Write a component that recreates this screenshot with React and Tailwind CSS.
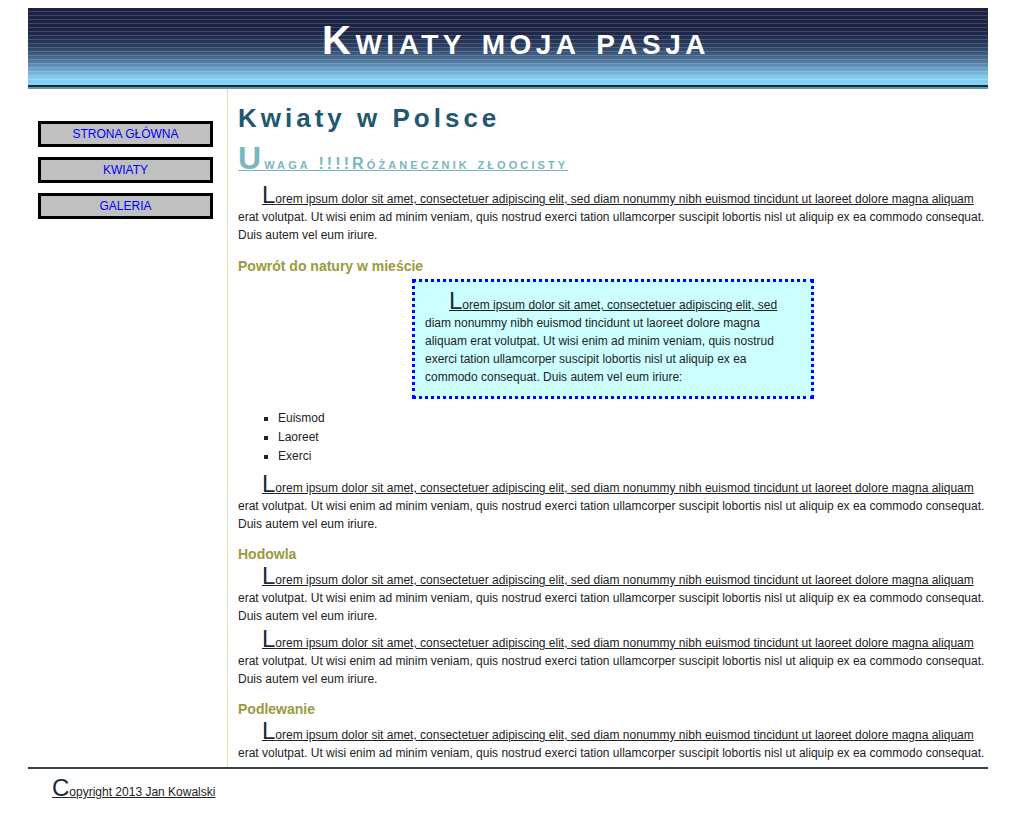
import React from 'react'

const lorem =
    'Lorem ipsum dolor sit amet, consectetuer adipiscing elit, sed diam nonummy nibh euismod tincidunt ut laoreet dolore magna aliquam erat volutpat. Ut wisi enim ad minim veniam, quis nostrud exerci tation ullamcorper suscipit lobortis nisl ut aliquip ex ea commodo consequat. Duis autem vel eum iriure.'

const Para = ({ children, className = '' }) => (
    <p
        className={
            'indent-6 first-line:underline first-letter:text-[24px] first-letter:text-[#1b2a3d] ' +
            className
        }
    >
        {children}
    </p>
)

const Heading = ({ children, className = 'mt-[12px]' }) => (
    <h3 className={'mb-[4px] text-[14px] leading-[18px] font-bold text-[#9c9a3c] ' + className}>{children}</h3>
)

const NavItem = ({ label }) => (
    <a
        href="#"
        className="block w-[175px] h-[26px] mb-[10px] border-[3px] border-black bg-[#c0c0c0] text-center text-[12px] leading-[20px] text-[#0000ff] uppercase"
    >
        {label}
    </a>
)

const App = () => {
    return (
        <div className="ml-[28px] w-[960px] pt-2 font-['Liberation_Sans',Arial,sans-serif] text-[#222] text-[12px] leading-[18px]">
            {/* naglowek */}
            <div className="h-[77px] bg-[linear-gradient(to_bottom,#1b2041_0%,#1c2445_30%,#2c3f62_50%,#4d7398_68%,#6eaad2_82%,#84d0f4_92%,#80caf0_100%)]">
                <div className="h-full pt-2 bg-[repeating-linear-gradient(to_bottom,transparent_0px,transparent_3px,rgba(255,255,255,0.16)_3px,rgba(255,255,255,0.16)_4px)]">
                    <h1 className="pl-4 text-center text-[40px] leading-[48px] font-bold text-white tracking-[4.5px] [font-variant:small-caps]">
                        Kwiaty moja pasja
                    </h1>
                </div>
            </div>
            <div className="h-[2px] bg-[#1c2c3c]"></div>
            <div className="h-[2px] bg-[#5a9aaa]"></div>

            <div className="flex items-start h-[678px]">
                {/* menu */}
                <div className="w-[200px] h-full shrink-0 border-r border-[#d8e8b0] pt-[32px] pl-[10px]">
                    <NavItem label="Strona główna" />
                    <NavItem label="Kwiaty" />
                    <NavItem label="Galeria" />
                </div>

                {/* tresc */}
                <div className="flex-1 h-[675px] overflow-hidden pl-[10px] pt-[14px]">
                    <h1 className="text-[26px] leading-[31px] font-bold text-[#1f5870] tracking-[4px]">Kwiaty w Polsce</h1>
                    <h2 className="mt-[12px] mb-[10px] text-[16px] leading-[24px] font-bold text-[#7ab5c0] underline tracking-[3.1px] [font-variant:small-caps] first-letter:text-[32px]">
                        Uwaga !!!!Różanecznik złoocisty
                    </h2>
                    <Para className="mb-[5px]">{lorem}</Para>

                    <Heading className="mt-[13px]">Powrót do natury w mieście</Heading>
                    <div className="mx-auto w-[402px] border-[3px] border-dotted border-[#0000ff] bg-[#ccffff] p-[10px]">
                        <Para>
                            Lorem ipsum dolor sit amet, consectetuer adipiscing elit, sed diam nonummy nibh euismod
                            tincidunt ut laoreet dolore magna aliquam erat volutpat. Ut wisi enim ad minim veniam, quis
                            nostrud exerci tation ullamcorper suscipit lobortis nisl ut aliquip ex ea commodo consequat.
                            Duis autem vel eum iriure:
                        </Para>
                    </div>

                    <ul className="mt-[10px] mb-[9px] pl-[40px] list-[square] leading-[19px]">
                        <li>Euismod</li>
                        <li>Laoreet</li>
                        <li>Exerci</li>
                    </ul>
                    <Para className="mb-[5px]">{lorem}</Para>

                    <Heading>Hodowla</Heading>
                    <Para className="mb-[5px]">{lorem}</Para>
                    <Para className="mb-[5px]">{lorem}</Para>

                    <Heading>Podlewanie</Heading>
                    <Para className="mb-[5px]">{lorem}</Para>
                </div>
            </div>

            {/* stopka */}
            <div className="border-t-2 border-[#2f4444] pt-[10px] pl-[24px] pb-[14px]">
                <p className="underline first-letter:text-[24px] first-letter:text-[#1b2a3d]">Copyright 2013 Jan Kowalski</p>
            </div>
        </div>
    )
}

export default App
